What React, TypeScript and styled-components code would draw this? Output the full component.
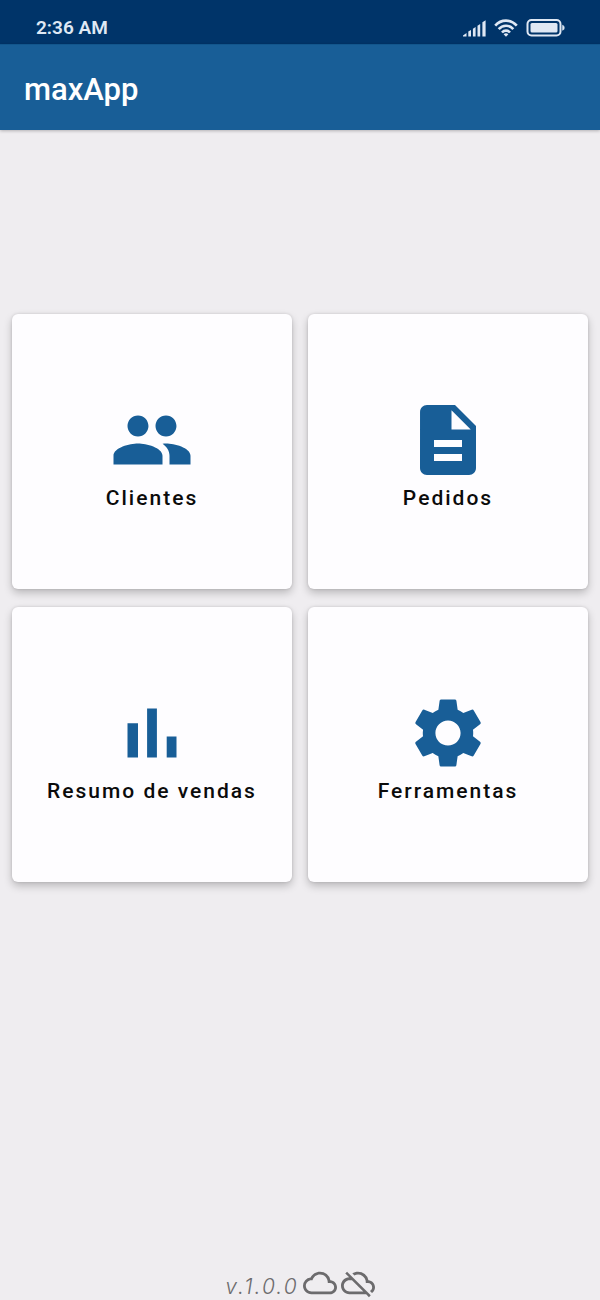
import React from "react";
import styled, { createGlobalStyle } from "styled-components";
import { MdCloudOff, MdCloudQueue, MdSettings } from "react-icons/md";

const GlobalStyle = createGlobalStyle`
  *, *::before, *::after { box-sizing: border-box; }
  body {
    margin: 0;
    background: #efedf0;
    font-family: Roboto, "Liberation Sans", sans-serif;
  }
`;

const Screen = styled.div`
  display: flex;
  flex-direction: column;
  min-height: 100vh;
`;

const StatusBar = styled.div`
  display: flex;
  align-items: center;
  justify-content: space-between;
  height: 44px;
  padding: 12px 35px 0 36px;
  background: #003469;
  color: #dfe8f4;
`;

const Clock = styled.time`
  font-size: 19px;
  line-height: 24px;
  font-weight: 600;
`;

const StatusIcons = styled.div`
  display: flex;
  align-items: center;
  gap: 8px;

  svg { display: block; }
`;

const AppBar = styled.header`
  display: flex;
  align-items: center;
  height: 86px;
  padding: 4px 24px 0;
  background: #185e97;
  border-top: 1px solid #12568c;
  box-shadow: 0 1px 3px rgba(0, 0, 0, 0.25);
`;

const AppTitle = styled.h1`
  margin: 0;
  color: #fff;
  font-size: 31px;
  line-height: 36px;
  font-weight: 500;
`;

const Menu = styled.main`
  flex: 1;
  display: grid;
  grid-template-columns: 1fr 1fr;
  align-content: start;
  gap: 18px 16px;
  padding: 184px 12px 24px;
`;

const Card = styled.button`
  display: flex;
  flex-direction: column;
  align-items: center;
  justify-content: center;
  min-height: 275px;
  padding: 8px 0 0;
  border: 0;
  border-radius: 6px;
  background: #fefdff;
  box-shadow: 0 4px 8px rgba(0, 0, 0, 0.22), 0 0 3px rgba(0, 0, 0, 0.12);
  color: #185e97;
  font-family: inherit;
  cursor: pointer;

  svg { display: block; }
`;

const CardLabel = styled.span`
  color: #0b0b0b;
  font-size: 21px;
  line-height: 32px;
  font-weight: 500;
  letter-spacing: 2px;
`;

const Footer = styled.footer`
  display: flex;
  align-items: center;
  justify-content: center;
  gap: 4px;
  height: 34px;
  color: #6c6b6d;
`;

const Version = styled.span`
  padding-top: 8px;
  font-family: Inter, Roboto, sans-serif;
  font-size: 21px;
  line-height: 26px;
  font-weight: 300;
  font-style: italic;
  letter-spacing: 2px;
`;

const glyph = (d: string) => () => (
  <svg width="84" height="84" viewBox="0 0 24 24" fill="currentColor" aria-hidden="true">
    <path d={d} />
  </svg>
);

const PeopleIcon = glyph(
  "M16 11c1.66 0 2.99-1.34 2.99-3S17.66 5 16 5c-1.66 0-3 1.34-3 3s1.34 3 3 3zm-8 0c1.66 0 2.99-1.34 2.99-3S9.66 5 8 5C6.34 5 5 6.34 5 8s1.34 3 3 3zm0 2c-2.33 0-7 1.17-7 3.5V19h14v-2.5c0-2.33-4.67-3.5-7-3.5zm8 0c-.29 0-.62.02-.97.05 1.16.84 1.97 1.97 1.97 3.45V19h6v-2.5c0-2.33-4.67-3.5-7-3.5z"
);
const DocumentIcon = glyph(
  "M14 2H6c-1.1 0-1.99.9-1.99 2L4 20c0 1.1.89 2 1.99 2H18c1.1 0 2-.9 2-2V8l-6-6zm2 16H8v-2h8v2zm0-4H8v-2h8v2zm-3-5V3.5L18.5 9H13z"
);
const BarsIcon = glyph("M5 9.2h3V19H5zM10.6 5h2.8v14h-2.8zm5.6 8H19v6h-2.8z");
const GearIcon = () => <MdSettings size={84} aria-hidden="true" />;

const items = [
  { label: "Clientes", Icon: PeopleIcon },
  { label: "Pedidos", Icon: DocumentIcon },
  { label: "Resumo de vendas", Icon: BarsIcon },
  { label: "Ferramentas", Icon: GearIcon },
];

const SignalIcon = () => (
  <svg width="23" height="17" viewBox="0 0 23 17" fill="currentColor" role="img" aria-label="Signal">
    <path d="M0 16.5v-1L3.500 13v3.500zM5.300 11.500l2.700-1.500v6.500H5.300zM9.900 8.700L12.600 7v9.500H9.900zM14.500 5.700L17.200 4v12.500h-2.700zM19.400 2.300L22.600 .3v16.200h-3.200z" />
  </svg>
);

const WifiIcon = () => (
  <svg width="24" height="18" viewBox="0 0 24 18" fill="none" stroke="currentColor" strokeWidth="2.6" role="img" aria-label="Wi-Fi">
    <path d="M1.200 6.600C7.200 0 16.800 0 22.800 6.600M4.700 10.200c4-4.600 10.600-4.600 14.600 0M8 13.500c2.200-2.500 5.800-2.500 8 0" />
    <path d="M9.600 15.200c1.400-1.300 3.400-1.300 4.800 0L12 17.800z" fill="currentColor" stroke="none" />
  </svg>
);

const BatteryIcon = () => (
  <svg width="39" height="18" viewBox="0 0 39 18" role="img" aria-label="Battery">
    <rect x="1.500" y="1" width="33" height="15.500" rx="4" fill="none" stroke="currentColor" strokeWidth="2" />
    <rect x="4.500" y="4" width="27" height="9.500" rx="1.500" fill="currentColor" />
    <path d="M36.500 6.200c2.400 .3 2.400 4.800 0 5.100z" fill="currentColor" stroke="currentColor" strokeWidth=".5" />
  </svg>
);

export default function App() {
  return (
    <Screen>
      <GlobalStyle />
      <StatusBar>
        <Clock>2:36 AM</Clock>
        <StatusIcons>
          <SignalIcon />
          <WifiIcon />
          <BatteryIcon />
        </StatusIcons>
      </StatusBar>
      <AppBar>
        <AppTitle>maxApp</AppTitle>
      </AppBar>
      <Menu>
        {items.map(({ label, Icon }) => (
          <Card key={label} type="button">
            <Icon />
            <CardLabel>{label}</CardLabel>
          </Card>
        ))}
      </Menu>
      <Footer>
        <Version>v.1.0.0</Version>
        <MdCloudQueue size={34} aria-hidden="true" />
        <MdCloudOff size={34} aria-hidden="true" />
      </Footer>
    </Screen>
  );
}
